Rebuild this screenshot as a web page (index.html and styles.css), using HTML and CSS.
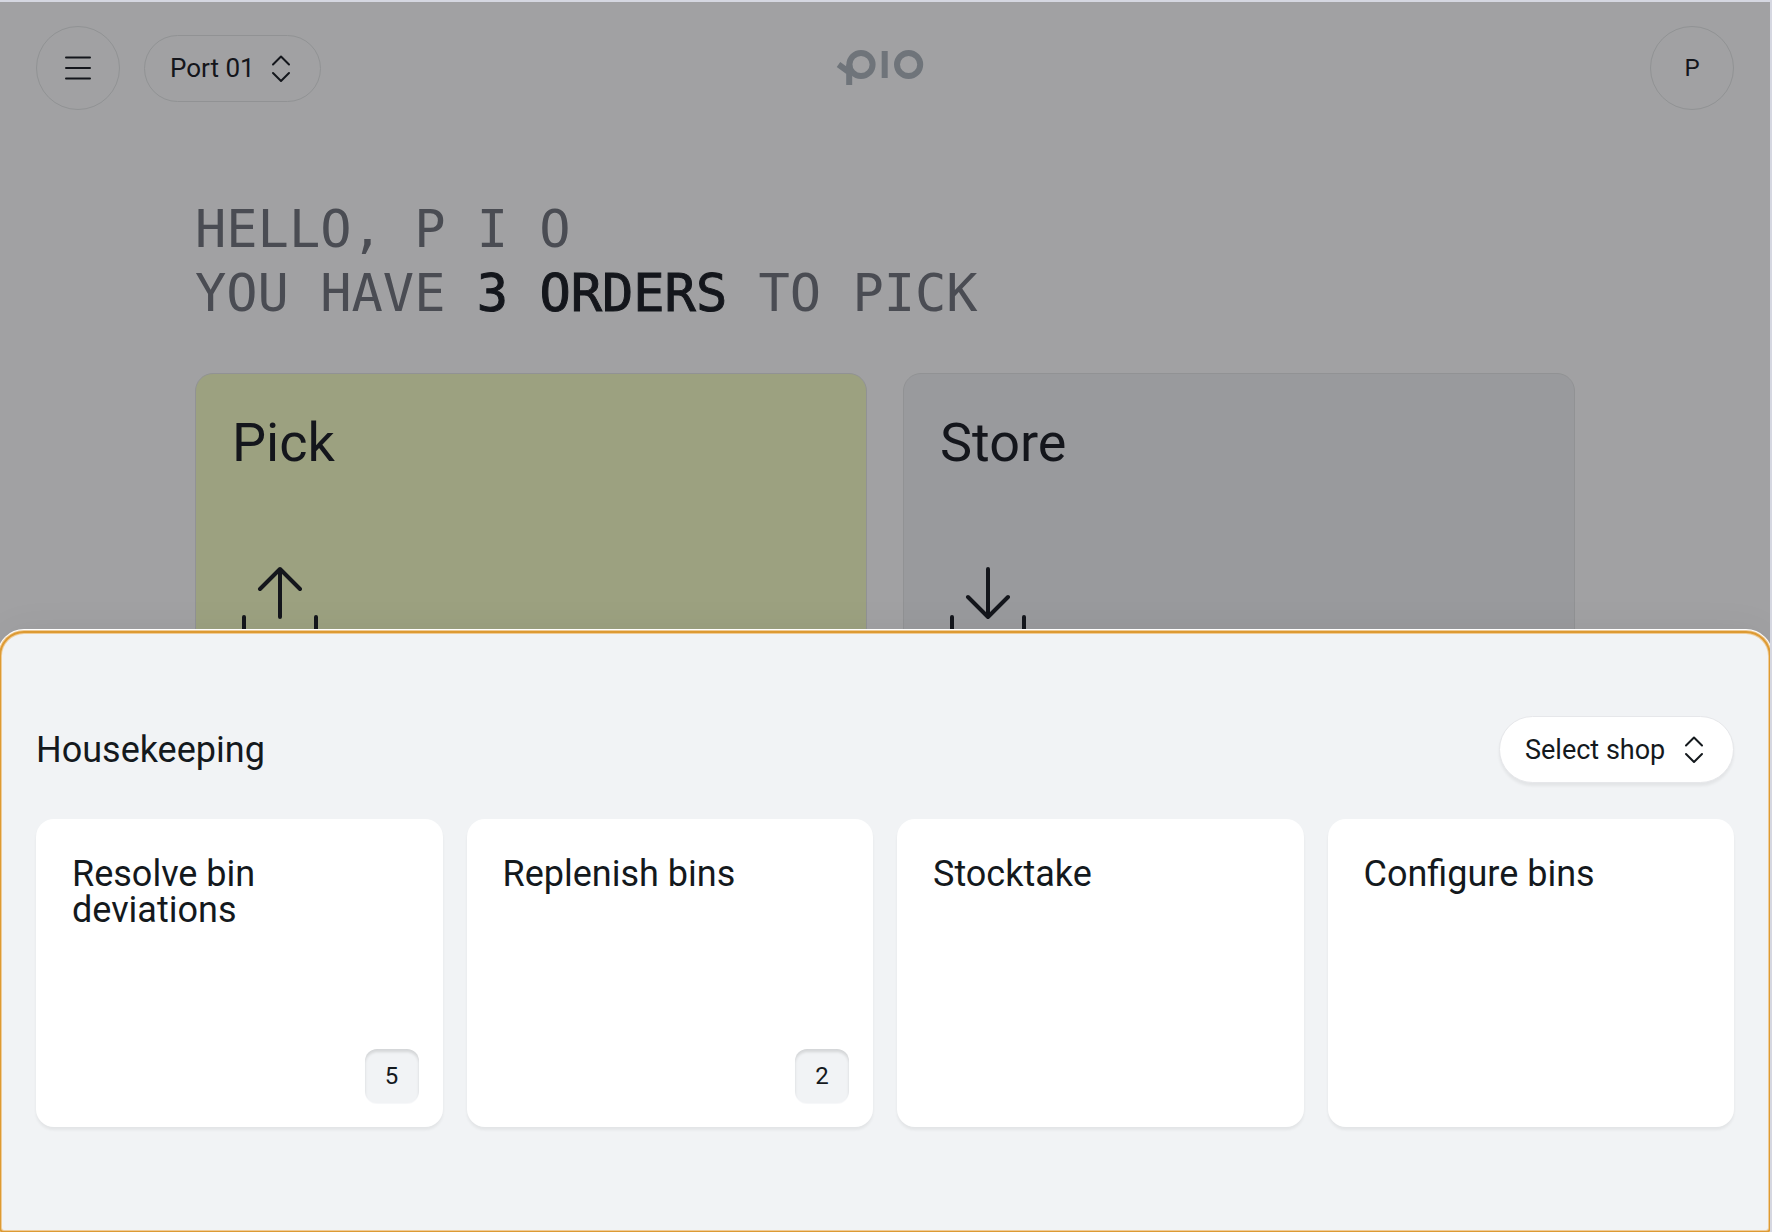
FILE: index.html
```html
<!DOCTYPE html>
<html lang="en">
<head>
  <meta charset="UTF-8" />
  <meta name="viewport" content="width=device-width, initial-scale=1.0"/>
  <title>Pio</title>
  <link rel="stylesheet" href="styles.css">
</head>
<body>
  <div class="app">
    <header class="topbar">
      <div class="topbar-left">
        <button class="round-btn" aria-label="Menu">
          <svg width="28" height="28" viewBox="0 0 28 28" fill="none" stroke="currentColor" stroke-width="2" stroke-linecap="round">
            <path d="M2 3.5h24M2 14h24M2 24.5h24"/>
          </svg>
        </button>
        <div class="pill">
          <select aria-label="Port">
            <option>Port 01</option>
          </select>
          <svg class="pill-icon" width="36" height="36" viewBox="0 0 36 36" fill="none" stroke="currentColor" stroke-width="2" stroke-linecap="round" stroke-linejoin="round">
            <path d="M10 13.5l8-8 8 8M10 22l8 8 8-8"/>
          </svg>
        </div>
      </div>
      <svg class="logo" width="98" height="38" viewBox="0 0 98 38" fill="none" stroke="currentColor" stroke-width="6" role="img" aria-label="pio">
        <circle cx="25" cy="15.5" r="11.6"/>
        <path d="M13.2 36V15.5M2.5 15.5l11 8M48.7 2v27"/>
        <circle cx="72.6" cy="15.5" r="11.6"/>
      </svg>
      <button class="round-btn profile">P</button>
    </header>

    <main class="home">
      <h1 class="greeting">
        HELLO, P I O<br>
        YOU HAVE <strong>3 ORDERS</strong> TO PICK
      </h1>
      <div class="tiles">
        <button class="tile tile-pick">
          <span>Pick</span>
          <svg width="96" height="96" viewBox="0 0 96 96" fill="none" stroke="currentColor" stroke-width="4" stroke-linecap="round" stroke-linejoin="round">
            <path d="M48 61V13M28 33l20-20 20 20M12 61v22h72V61"/>
          </svg>
        </button>
        <button class="tile tile-store">
          <span>Store</span>
          <svg width="96" height="96" viewBox="0 0 96 96" fill="none" stroke="currentColor" stroke-width="4" stroke-linecap="round" stroke-linejoin="round">
            <path d="M48 13v48M28 41l20 20 20-20M12 61v22h72V61"/>
          </svg>
        </button>
      </div>
    </main>

    <div class="scrim"></div>

    <section class="sheet" role="dialog" aria-labelledby="sheetTitle">
      <div class="sheet-header">
        <h2 id="sheetTitle">Housekeeping</h2>
        <div class="pill pill-light">
          <select aria-label="Shop">
            <option>Select shop</option>
          </select>
          <svg class="pill-icon" width="36" height="36" viewBox="0 0 36 36" fill="none" stroke="currentColor" stroke-width="2" stroke-linecap="round" stroke-linejoin="round">
            <path d="M10 13.5l8-8 8 8M10 22l8 8 8-8"/>
          </svg>
        </div>
      </div>
      <div class="cards">
        <button class="card">
          <span class="card-title">Resolve bin deviations</span>
          <span class="badge">5</span>
        </button>
        <button class="card">
          <span class="card-title">Replenish bins</span>
          <span class="badge">2</span>
        </button>
        <button class="card">
          <span class="card-title">Stocktake</span>
        </button>
        <button class="card">
          <span class="card-title">Configure bins</span>
        </button>
      </div>
    </section>
  </div>
</body>
</html>
```
FILE: styles.css
```css
* {
  box-sizing: border-box;
}

body {
  margin: 0;
  font-family: Roboto, "Liberation Sans", sans-serif;
  color: #14191d;
}

button,
select {
  font-family: inherit;
  color: inherit;
  cursor: pointer;
}

.app {
  position: relative;
  height: 100vh;
  overflow: hidden;
  background-color: #f0f1f3;
  border-top: 2px solid #d5d7e1;
  border-right: 2px solid #d5d7e1;
}

/* top bar */
.topbar {
  display: grid;
  grid-template-columns: 1fr auto 1fr;
  align-items: center;
  padding: 24px 36px;
  color: #1e222a;
}

.topbar-left {
  display: flex;
  align-items: center;
  gap: 24px;
}

.round-btn {
  display: flex;
  align-items: center;
  justify-content: center;
  width: 84px;
  height: 84px;
  padding: 0;
  background: none;
  border: 1px solid #d8dadd;
  border-radius: 50%;
  font-size: 24px;
}

.profile {
  justify-self: end;
}

.logo {
  color: #a6adb7;
}

.pill {
  position: relative;
  font-size: 26px;
}

.pill select {
  display: block;
  height: 67px;
  padding: 0 65px 0 25px;
  appearance: none;
  background: none;
  border: 1px solid #d8dadd;
  border-radius: 34px;
  font-size: inherit;
}

.pill-icon {
  position: absolute;
  top: 16px;
  right: 22px;
  pointer-events: none;
}

.pill-light {
  font-size: 27px;
}

.pill-light select {
  padding-right: 67px;
  background-color: #fff;
  border-color: #e6e7ea;
  box-shadow: 0 3px 3px rgba(0, 0, 0, 0.06);
}

/* home */
.home {
  max-width: 1452px;
  margin: 0 auto;
  padding: 63px 36px;
  color: #1e222a;
}

.greeting {
  margin: 0 0 48px;
  font-family: "DejaVu Sans Mono", monospace;
  font-size: 52px;
  line-height: 64px;
  font-weight: 400;
  color: #6f727c;
}

.greeting strong {
  font-weight: 400;
  color: #1e222a;
  -webkit-text-stroke: 1px #1e222a;
}

.tiles {
  display: grid;
  grid-template-columns: 1fr 1fr;
  gap: 36px;
}

.tile {
  display: flex;
  flex-direction: column;
  align-items: flex-start;
  justify-content: space-between;
  min-height: 316px;
  padding: 36px;
  border: 1px solid #d8dadd;
  border-radius: 18px;
  font-size: 54px;
  line-height: 66px;
}

.tile-pick {
  background-color: #e9f0bf;
}

.tile-store {
  background-color: #e5e6eb;
}

.scrim {
  position: absolute;
  inset: 0;
  background-color: rgba(0, 0, 0, 0.33);
}

/* bottom sheet */
.sheet {
  position: absolute;
  left: 0;
  right: 0;
  bottom: 0;
  padding: 84px 36px 105px;
  background-color: #f1f3f5;
  border-radius: 24px 24px 4px 4px;
  outline: 2px solid #dd9a33;
  outline-offset: -1px;
  box-shadow: inset 0 0 0 2px #efcc98, 0 0 0 2px #efcc98, 0 0 0 3px #fff, 0 0 40px rgba(0, 0, 0, 0.06);
}

.sheet-header {
  display: flex;
  align-items: center;
  justify-content: space-between;
  margin-bottom: 36px;
}

.sheet-header h2 {
  margin: 0;
  font-size: 36px;
  line-height: 36px;
  font-weight: 400;
}

.cards {
  display: grid;
  grid-template-columns: repeat(4, 1fr);
  gap: 24px;
}

.card {
  display: flex;
  flex-direction: column;
  justify-content: space-between;
  min-height: 308px;
  padding: 37px 24px 24px 36px;
  background-color: #fff;
  border: none;
  border-radius: 18px;
  box-shadow: 0 3px 3px rgba(0, 0, 0, 0.06);
  font-size: 36px;
  line-height: 36px;
  text-align: left;
}

.card-title {
  max-width: 260px;
}

.badge {
  display: flex;
  align-items: center;
  justify-content: center;
  align-self: flex-end;
  width: 54px;
  height: 54px;
  background-color: #f1f3f5;
  border-radius: 12px;
  box-shadow: inset 0 3px 3px rgba(0, 0, 0, 0.12), 0 1px 1px #f6f7f9;
  font-size: 24px;
}
```
